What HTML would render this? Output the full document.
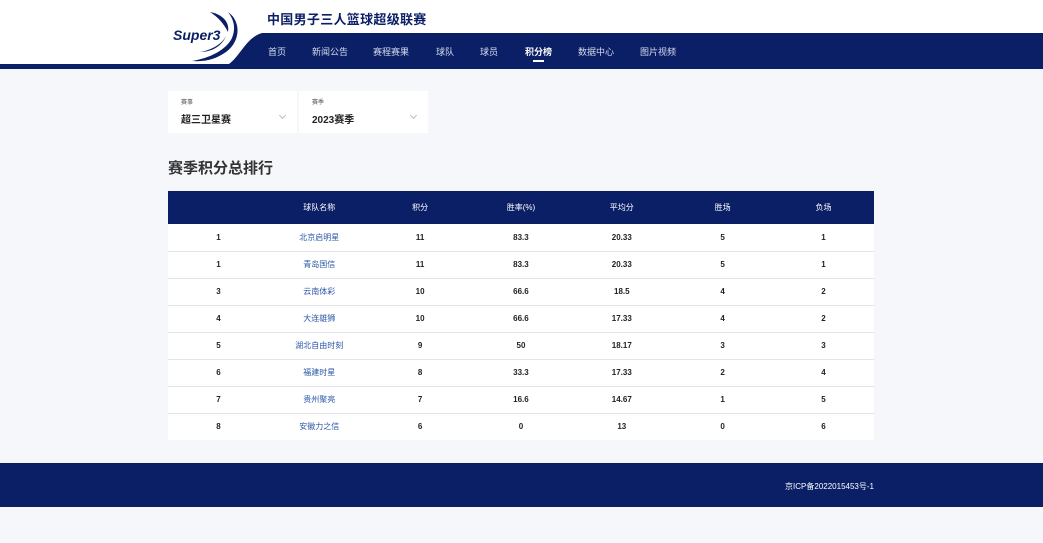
<!DOCTYPE html>
<html><head><meta charset="utf-8"><style>
*{margin:0;padding:0;box-sizing:border-box}
body{width:1043px;height:543px;background:#f5f7fb;font-family:"Liberation Sans","Noto Sans CJK SC",sans-serif;position:relative;overflow:hidden}
.top{position:absolute;left:0;top:0;width:1043px;height:64px;background:#fff}
.strip{position:absolute;left:0;top:64px;width:1043px;height:5px;background:#0b1f66}
.title{position:absolute;left:267px;top:9px;font-size:13px;font-weight:bold;color:#0b1f66;letter-spacing:0.3px}
.nav{position:absolute;left:0;top:33px;width:1043px;height:33px}
.navi{position:absolute;top:45px;font-size:9px;color:#d6dcef}
.navi.on{color:#fff;font-weight:bold}
.sel{position:absolute;top:91px;width:129px;height:42px;background:#fff}
.sel .l{position:absolute;left:13px;top:6px;font-size:6px;color:#555}
.sel .v{position:absolute;left:13px;top:20px;font-size:10px;font-weight:bold;color:#222}
.sel .a{position:absolute;right:12px;top:22px;width:5px;height:5px;border-right:1px solid #bbb;border-bottom:1px solid #bbb;transform:rotate(45deg)}
h2{position:absolute;left:168px;top:157px;font-size:15px;color:#333;font-weight:bold}
table{position:absolute;left:168px;top:191px;width:706px;border-collapse:collapse;background:#fff;table-layout:fixed}
th{background:#0b1f66;color:#fff;font-size:8px;font-weight:normal;height:33px;width:14.28%}
td{height:27px;font-size:8px;text-align:center;color:#222;font-weight:bold;border-bottom:1px solid #e2e4ea}
td.n{color:#2a57a8;font-weight:normal}
tr:last-child td{border-bottom:none}
.foot{position:absolute;left:0;top:463px;width:1043px;height:44px;background:#0b1f66}
.foot span{position:absolute;right:169px;top:18px;font-size:8px;color:#fff}
</style></head><body>
<div class="top"></div>
<svg class="nav" width="1043" height="33" viewBox="0 0 1043 33"><path d="M262 0 H1043 V33 H226 C240 25 245 5 262 0 Z" fill="#0b1f66"/></svg>
<div class="strip"></div>
<svg style="position:absolute;left:170px;top:8px" width="75" height="56" viewBox="0 0 75 56">
<path d="M58 4 C72 14 70 34 56 44 C46 51 36 54 22 53 C40 50 56 42 62 30 C66 20 64 12 58 4Z" fill="#0b1f66"/>
<path d="M40 4 C52 6 60 14 58 24 C54 16 48 9 40 4Z" fill="#0b1f66"/>
<path d="M30 44 C42 42 52 36 56 28 C52 38 42 44 30 44Z" fill="#0b1f66"/>
<text x="3" y="32" font-family="Liberation Sans" font-style="italic" font-weight="bold" font-size="14" fill="#0b1f66">Super3</text>
</svg>
<div class="title">中国男子三人篮球超级联赛</div>
<div class="navi" style="left:268px">首页</div>
<div class="navi" style="left:312px">新闻公告</div>
<div class="navi" style="left:373px">赛程赛果</div>
<div class="navi" style="left:436px">球队</div>
<div class="navi" style="left:480px">球员</div>
<div class="navi on" style="left:525px">积分榜</div>
<div style="position:absolute;left:533px;top:60px;width:11px;height:2px;background:#fff"></div>
<div class="navi" style="left:578px">数据中心</div>
<div class="navi" style="left:640px">图片视频</div>
<div class="sel" style="left:168px"><div class="l">赛事</div><div class="v">超三卫星赛</div><div class="a"></div></div>
<div class="sel" style="left:299px"><div class="l">赛季</div><div class="v">2023赛季</div><div class="a"></div></div>
<h2>赛季积分总排行</h2>
<table>
<tr><th></th><th>球队名称</th><th>积分</th><th>胜率(%)</th><th>平均分</th><th>胜场</th><th>负场</th></tr>
<tr><td>1</td><td class="n">北京启明星</td><td>11</td><td>83.3</td><td>20.33</td><td>5</td><td>1</td></tr>
<tr><td>1</td><td class="n">青岛国信</td><td>11</td><td>83.3</td><td>20.33</td><td>5</td><td>1</td></tr>
<tr><td>3</td><td class="n">云南体彩</td><td>10</td><td>66.6</td><td>18.5</td><td>4</td><td>2</td></tr>
<tr><td>4</td><td class="n">大连雄狮</td><td>10</td><td>66.6</td><td>17.33</td><td>4</td><td>2</td></tr>
<tr><td>5</td><td class="n">湖北自由时刻</td><td>9</td><td>50</td><td>18.17</td><td>3</td><td>3</td></tr>
<tr><td>6</td><td class="n">福建时星</td><td>8</td><td>33.3</td><td>17.33</td><td>2</td><td>4</td></tr>
<tr><td>7</td><td class="n">贵州聚亮</td><td>7</td><td>16.6</td><td>14.67</td><td>1</td><td>5</td></tr>
<tr><td>8</td><td class="n">安徽力之信</td><td>6</td><td>0</td><td>13</td><td>0</td><td>6</td></tr>
</table>
<div class="foot"><span>京ICP备2022015453号-1</span></div>
</body></html>
